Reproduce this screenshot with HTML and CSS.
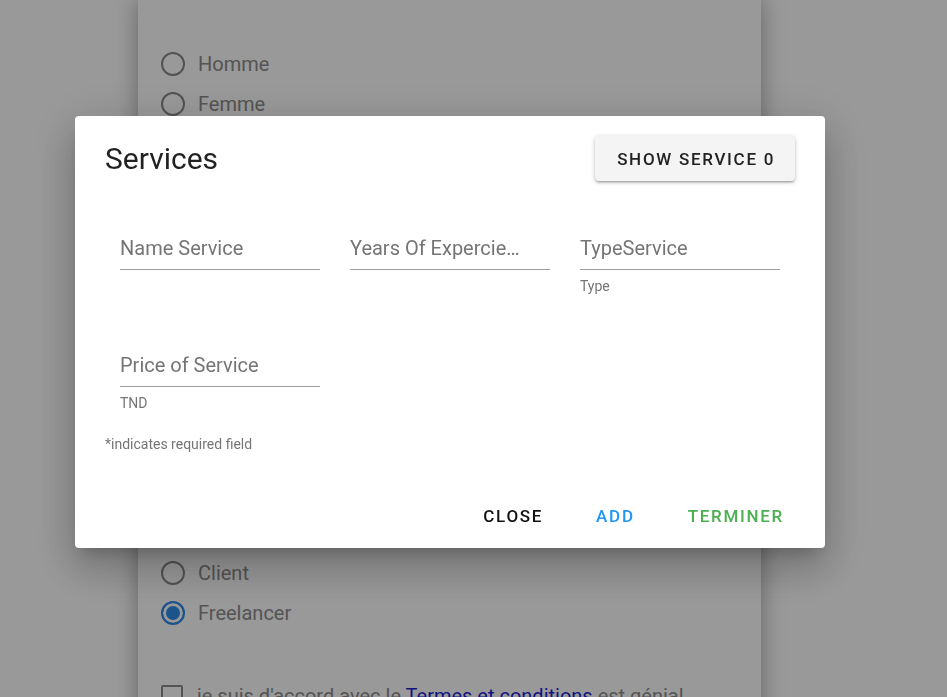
FILE: index.html
```html
<!DOCTYPE html>
<html lang="fr">
<head>
<meta charset="utf-8">
<title>Services</title>
<link rel="stylesheet" href="styles.css">
</head>
<body>
<div class="page">
  <div class="card">
    <div class="radio-group">
      <label class="radio"><span class="circle"></span><span class="radio-label">Homme</span></label>
      <label class="radio"><span class="circle"></span><span class="radio-label">Femme</span></label>
    </div>
    <div class="covered"></div>
    <div class="radio-group">
      <label class="radio"><span class="circle"></span><span class="radio-label">Client</span></label>
      <label class="radio"><span class="circle checked"></span><span class="radio-label">Freelancer</span></label>
    </div>
    <label class="check"><span class="box"></span><span class="check-label">je suis d'accord avec le <a href="#" class="link">Termes et conditions</a> est génial</span></label>
  </div>
</div>
<div class="overlay"></div>
<div class="modal">
  <div class="modal-head">
    <h4 class="modal-title">Services</h4>
    <button class="btn-raised">SHOW SERVICE 0</button>
  </div>
  <div class="fields">
    <div class="field"><div class="input"><span class="label">Name Service</span></div><div class="helper"></div></div>
    <div class="field"><div class="input"><span class="label">Years Of Experciences</span></div><div class="helper"></div></div>
    <div class="field"><div class="input"><span class="label">TypeService</span></div><div class="helper">Type</div></div>
    <div class="field"><div class="input"><span class="label">Price of Service</span></div><div class="helper">TND</div></div>
  </div>
  <p class="note">*indicates required field</p>
  <div class="modal-foot">
    <button class="btn-flat close">CLOSE</button>
    <button class="btn-flat add">ADD</button>
    <button class="btn-flat done">TERMINER</button>
  </div>
</div>
</body>
</html>
```
FILE: styles.css
```css
* { box-sizing: border-box; }
html, body { margin: 0; padding: 0; }
body {
  background: #ffffff;
  font-family: Roboto, "Noto Sans", "Liberation Sans", sans-serif;
  overflow: hidden;
  height: 697px;
}
.page { padding: 0; }
.card {
  margin-left: 138px;
  width: 623px;
  min-height: 760px;
  background: #ffffff;
  padding: 44px 0 0 23px;
  box-shadow: 0 0 22px rgba(0,0,0,0.35);
}
.radio-group { display: flex; flex-direction: column; }
.radio {
  display: flex;
  align-items: center;
  gap: 13px;
  height: 40px;
}
.circle {
  width: 24px;
  height: 24px;
  border: 2px solid #8a8a8a;
  border-radius: 50%;
  flex: none;
}
.circle.checked {
  border-color: #2f8ae8;
  background: #2f8ae8;
  box-shadow: inset 0 0 0 3px #ffffff;
}
.radio-label { font-size: 20px; color: #8c8c8c; }
.covered { height: 429px; }
.check {
  display: flex;
  align-items: center;
  gap: 14px;
  height: 40px;
  margin-top: 43px;
}
.box {
  width: 22px;
  height: 22px;
  border: 2px solid #8a8a8a;
  border-radius: 2px;
  flex: none;
}
.check-label { font-size: 20px; color: #8c8c8c; white-space: nowrap; }
.link { color: #1f1fd8; text-decoration: underline; }

.overlay {
  position: fixed;
  inset: 0;
  background: rgba(0,0,0,0.4);
}
.modal {
  position: fixed;
  left: 75px;
  top: 116px;
  width: 750px;
  background: #ffffff;
  border-radius: 4px;
  padding: 20px 25px 14px 30px;
  box-shadow: 0 24px 38px 3px rgba(0,0,0,0.14), 0 9px 46px 8px rgba(0,0,0,0.12), 0 11px 15px -7px rgba(0,0,0,0.2);
}
.modal-head {
  display: flex;
  justify-content: space-between;
  align-items: center;
  height: 45px;
  padding-right: 5px;
}
.modal-title {
  margin: 0;
  font-size: 30px;
  font-weight: 400;
  color: rgba(0,0,0,0.87);
}
.btn-raised {
  height: 45px;
  padding: 0 20px 0 22px;
  background: #f4f4f4;
  border: none;
  border-radius: 4px;
  font-family: inherit;
  font-size: 17px;
  font-weight: 500;
  letter-spacing: 1.7px;
  color: #222;
  box-shadow: 0 2px 2px 0 rgba(0,0,0,0.14), 0 3px 1px -2px rgba(0,0,0,0.12), 0 1px 5px 0 rgba(0,0,0,0.2);
}
.fields {
  display: grid;
  grid-template-columns: 200px 200px 200px;
  column-gap: 30px;
  row-gap: 48px;
  padding-left: 15px;
  margin-top: 45px;
}
.input {
  height: 44px;
  border-bottom: 1px solid #9e9e9e;
  padding-top: 1px;
  font-size: 20px;
  line-height: 43px;
  color: #757575;
}
.label {
  display: block;
  max-width: 170px;
  white-space: nowrap;
  overflow: hidden;
  text-overflow: ellipsis;
}
.helper {
  margin-top: 7px;
  height: 18px;
  line-height: 18px;
  font-size: 14px;
  color: #757575;
}
.note {
  margin: 23px 0 0 0;
  font-size: 14px;
  line-height: 18px;
  color: #757575;
}
.modal-foot {
  display: flex;
  justify-content: flex-end;
  gap: 21px;
  margin-top: 45px;
}
.btn-flat {
  height: 36px;
  padding: 0 16px;
  background: transparent;
  border: none;
  font-family: inherit;
  font-size: 17px;
  font-weight: 500;
  letter-spacing: 1.7px;
}
.close { color: #111; }
.add { color: #2196f3; }
.done { color: #4caf50; }
```
